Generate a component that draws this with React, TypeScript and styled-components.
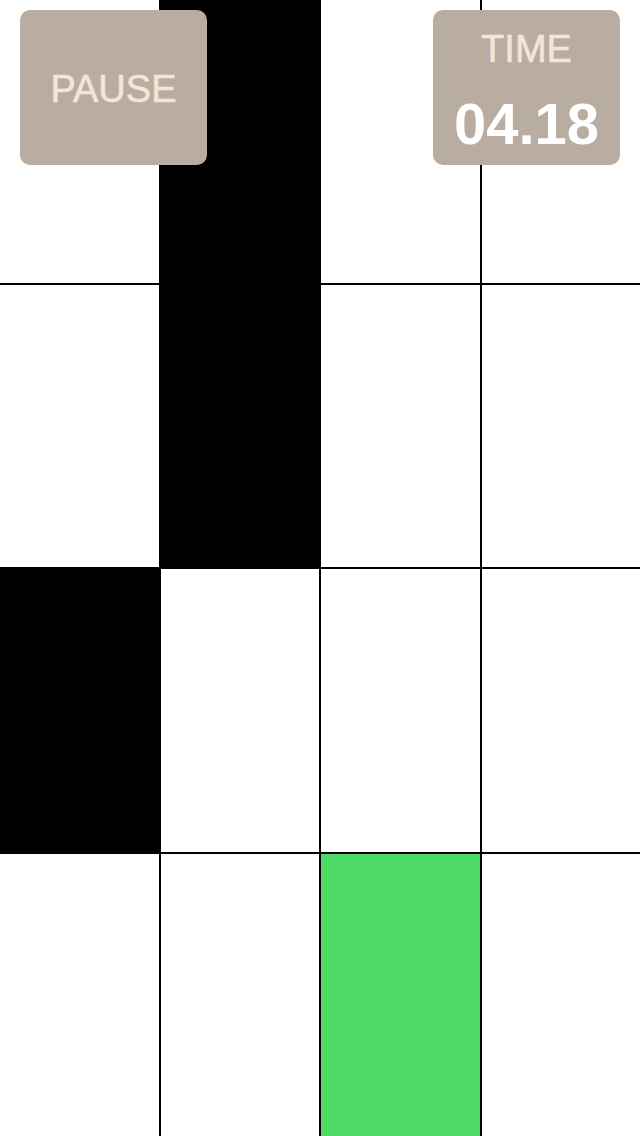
import React from "react";
import styled, { createGlobalStyle } from "styled-components";

const GlobalStyle = createGlobalStyle`
  html, body {
    margin: 0;
    padding: 0;
    background: #ffffff;
  }
  body {
    font-family: "Liberation Sans", Arial, sans-serif;
  }
`;

const Screen = styled.div`
  position: relative;
  width: 640px;
  height: 1136px;
  overflow: hidden;
`;

const Board = styled.div`
  display: grid;
  grid-template-columns: repeat(4, 1fr);
  grid-template-rows: repeat(4, 1fr);
  gap: 2px;
  width: 100%;
  height: 100%;
  background: #000000;
`;

type TileKind = "white" | "black" | "green";

const tileColors: Record<TileKind, string> = {
  white: "#ffffff",
  black: "#000000",
  green: "#4cd964",
};

const Tile = styled.div<{ $kind: TileKind }>`
  background: ${(p) => tileColors[p.$kind]};
`;

const Panel = styled.div<{ $side: "left" | "right" }>`
  position: absolute;
  top: 10px;
  ${(p) => (p.$side === "left" ? "left: 20px;" : "right: 20px;")}
  width: 187px;
  height: 155px;
  box-sizing: border-box;
  border-radius: 10px;
  background: #b9aca0;
  display: flex;
  flex-direction: column;
  align-items: center;
  justify-content: ${(p) => (p.$side === "left" ? "center" : "flex-start")};
  padding-top: ${(p) => (p.$side === "left" ? "3px" : "20px")};
  color: #f3e5d9;
`;

const Label = styled.div`
  font-size: 38px;
  line-height: 1;
  -webkit-text-stroke: 0.6px #f3e5d9;
`;

const TimeValue = styled.div`
  margin-top: 27px;
  font-size: 58px;
  font-weight: bold;
  line-height: 1;
  color: #ffffff;
`;

const rows: TileKind[][] = [
  ["white", "black", "white", "white"],
  ["white", "black", "white", "white"],
  ["black", "white", "white", "white"],
  ["white", "white", "green", "white"],
];

export default function App() {
  return (
    <>
      <GlobalStyle />
      <Screen>
        <Board>
          {rows.flatMap((row, r) =>
            row.map((kind, c) => <Tile key={`${r}-${c}`} $kind={kind} />)
          )}
        </Board>
        <Panel $side="left">
          <Label>PAUSE</Label>
        </Panel>
        <Panel $side="right">
          <Label>TIME</Label>
          <TimeValue>04.18</TimeValue>
        </Panel>
      </Screen>
    </>
  );
}
